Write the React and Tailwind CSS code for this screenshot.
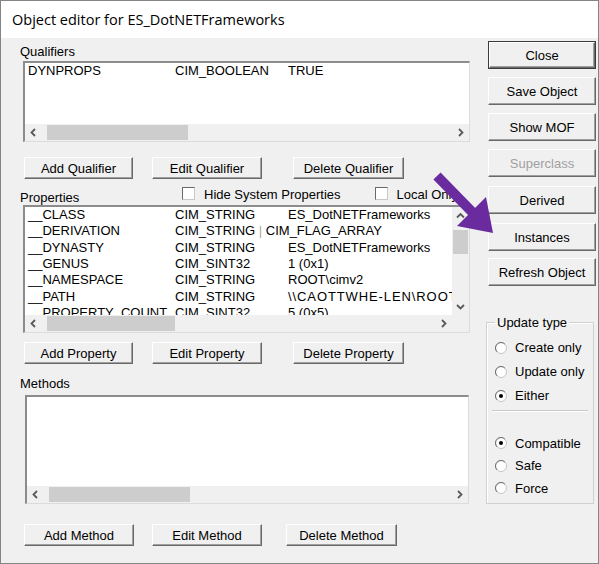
import React from "react";

const sans = "font-['Liberation_Sans',Arial,sans-serif]";

const qualifiers = [["DYNPROPS", "CIM_BOOLEAN", "TRUE"]];

const properties = [
  ["__CLASS", "CIM_STRING", "ES_DotNETFrameworks"],
  [
    "__DERIVATION",
    <>
      CIM_STRING <span className="text-[#b0a898]">|</span> CIM_FLAG_ARRAY
    </>,
    "",
  ],
  ["__DYNASTY", "CIM_STRING", "ES_DotNETFrameworks"],
  ["__GENUS", "CIM_SINT32", "1 (0x1)"],
  ["__NAMESPACE", "CIM_STRING", "ROOT\\cimv2"],
  [
    "__PATH",
    "CIM_STRING",
    <span className="tracking-[0.9px]">\\CAOTTWHE-LEN\ROOT\cimv2:ES_DotNETFrameworks</span>,
  ],
  ["__PROPERTY_COUNT", "CIM_SINT32", "5 (0x5)"],
];

const Chevron = ({ dir }) => {
  const pts = {
    left: "5,1 1.5,4.5 5,8",
    right: "2,1 5.5,4.5 2,8",
    up: "1,5.5 4.5,2 8,5.5",
    down: "1,2 4.5,5.5 8,2",
  }[dir];
  const box = dir === "left" || dir === "right" ? [7, 9] : [9, 7];
  return (
    <svg width={box[0]} height={box[1]} viewBox={`0 0 ${box[0]} ${box[1]}`}>
      <polyline points={pts} fill="none" stroke="#5a5a5a" strokeWidth="1.8" />
    </svg>
  );
};

const HScroll = ({ thumb }) => (
  <div className="h-[17px] shrink-0 flex bg-[#f0f0f0]">
    <div className="w-[17px] flex items-center justify-center">
      <Chevron dir="left" />
    </div>
    <div className="flex-1 py-[1px] pl-[5px]">
      <div className={`h-full bg-[#cdcdcd] ${thumb}`} />
    </div>
    <div className="w-[17px] flex items-center justify-center">
      <Chevron dir="right" />
    </div>
  </div>
);

const Row = ({ cells }) => (
  <div className="flex h-[16.33px] leading-[16.33px] whitespace-nowrap">
    <div className="w-[150px] shrink-0 pl-[3px]">{cells[0]}</div>
    <div className="w-[113px] shrink-0">{cells[1]}</div>
    <div className="shrink-0">{cells[2]}</div>
  </div>
);

const sunken =
  "bg-white border-t-2 border-l-2 border-r border-b border-t-[#8c8c8c] border-l-[#8c8c8c] border-r-[#dcdcdc] border-b-[#dcdcdc]";

const Btn = ({ label, className = "", disabled }) => (
  <button
    className={`bg-[#f0f0f0] border border-t-white border-l-white border-r-[#696969] border-b-[#696969] shadow-[inset_-1px_-1px_0_#a0a0a0] text-[13px] leading-none ${
      disabled ? "text-[#a0a0a0]" : "text-black"
    } ${className}`}
  >
    {label}
  </button>
);

const Check = ({ label }) => (
  <div className="flex items-start">
    <span className="w-[13px] h-[13px] bg-white border border-t-[#696969] border-l-[#696969] border-r-[#c8c8c8] border-b-[#c8c8c8]" />
    <span className="ml-[9px] leading-[15px] whitespace-nowrap">{label}</span>
  </div>
);

const Radio = ({ label, checked, className }) => (
  <div className={`flex items-center pl-[8px] ${className}`}>
    <svg width="12" height="12" viewBox="0 0 12 12" className="shrink-0">
      <circle cx="6" cy="6" r="5.5" fill="#fff" stroke="#c4c4c4" />
      <path d="M2.1 9.9 A5.5 5.5 0 0 1 9.9 2.1" fill="none" stroke="#6e6e6e" />
      {checked && <circle cx="6" cy="6" r="2" fill="#000" />}
    </svg>
    <span className="ml-[8px] whitespace-nowrap">{label}</span>
  </div>
);

export default function App() {
  return (
    <div
      className={`relative w-[599px] h-[564px] bg-[#f0f0f0] border border-[#858585] flex flex-col text-[13px] text-black ${sans}`}
    >
      {/* title bar */}
      <div className="h-[37px] shrink-0 bg-white flex items-center px-[11px]">
        <span className="font-['Open_Sans',sans-serif] text-[14.5px] text-black">
          Object editor for ES_DotNETFrameworks
        </span>
      </div>

      <div className="flex flex-1">
        {/* left side: qualifiers, properties, methods */}
        <div className="w-[487px] shrink-0 pl-[19px] flex flex-col">
          <div className="mt-[6px] leading-[15px]">Qualifiers</div>
          <div className={`mt-[2px] ml-[3px] w-[447px] h-[81px] flex flex-col ${sunken}`}>
            <div className="flex-1 overflow-hidden">
              {qualifiers.map((q) => (
                <Row key={q[0]} cells={q} />
              ))}
            </div>
            <HScroll thumb="w-[141px]" />
          </div>
          <div className="mt-[15px] ml-[4px] flex h-[22px]">
            <Btn label="Add Qualifier" className="w-[109px]" />
            <Btn label="Edit Qualifier" className="w-[110px] ml-[19px]" />
            <Btn label="Delete Qualifier" className="w-[111px] ml-[31px]" />
          </div>

          <div className="mt-[8px] h-[18px] flex">
            <div className="pt-[3px] leading-[15px] w-[162px]">Properties</div>
            <Check label="Hide System Properties" />
            <div className="ml-[34px]">
              <Check label="Local Only" />
            </div>
          </div>
          <div className={`ml-[3px] w-[447px] h-[128px] flex flex-col ${sunken}`}>
            <div className="flex-1 flex min-h-0">
              <div className="flex-1 overflow-hidden">
                {properties.map((p) => (
                  <Row key={p[0]} cells={p} />
                ))}
              </div>
              <div className="w-[17px] flex flex-col bg-[#f0f0f0]">
                <div className="h-[17px] flex items-center justify-center">
                  <Chevron dir="up" />
                </div>
                <div className="flex-1 px-[1px] pt-[6px]">
                  <div className="h-[24px] bg-[#cdcdcd]" />
                </div>
                <div className="h-[17px] flex items-center justify-center">
                  <Chevron dir="down" />
                </div>
              </div>
            </div>
            <div className="flex">
              <div className="flex-1">
                <HScroll thumb="w-[128px]" />
              </div>
              <div className="w-[17px] bg-[#f0f0f0]" />
            </div>
          </div>
          <div className="mt-[9px] ml-[4px] flex h-[22px]">
            <Btn label="Add Property" className="w-[109px]" />
            <Btn label="Edit Property" className="w-[110px] ml-[19px]" />
            <Btn label="Delete Property" className="w-[111px] ml-[31px]" />
          </div>

          <div className="mt-[12px] leading-[15px]">Methods</div>
          <div className={`mt-[4px] ml-[5px] w-[444px] h-[109px] flex flex-col ${sunken}`}>
            <div className="flex-1" />
            <HScroll thumb="w-[141px]" />
          </div>
          <div className="mt-[20px] ml-[4px] flex h-[22px]">
            <Btn label="Add Method" className="w-[110px]" />
            <Btn label="Edit Method" className="w-[110px] ml-[18px]" />
            <Btn label="Delete Method" className="w-[111px] ml-[24px]" />
          </div>
        </div>

        {/* right side: command buttons and update type */}
        <div className="w-[108px] shrink-0 flex flex-col">
          <div className="mt-[3px] h-[28px] border border-[#3c3c3c] flex">
            <Btn label="Close" className="flex-1" />
          </div>
          <Btn label="Save Object" className="mt-[8px] h-[28px]" />
          <Btn label="Show MOF" className="mt-[8px] h-[28px]" />
          <Btn label="Superclass" disabled className="mt-[8px] h-[28px]" />
          <Btn label="Derived" className="mt-[9px] h-[28px]" />
          <Btn label="Instances" className="mt-[9px] h-[28px]" />
          <Btn label="Refresh Object" className="mt-[7px] h-[28px]" />

          <fieldset className="mt-[29px] -ml-[2px] w-[108px] h-[189px] border border-[#d0d0d0] shadow-[inset_1px_1px_0_#fff]">
            <legend className="ml-[8px] px-[2px] leading-[15px]">Update type</legend>
            <div className="mt-[6px]">
              <Radio label="Create only" className="h-[24px]" />
              <Radio label="Update only" className="h-[24px]" />
              <Radio label="Either" checked className="h-[24px]" />
            </div>
            <div className="mt-[2px] mx-[5px] h-[2px] border-t border-t-[#c8c8c8] border-b border-b-white" />
            <div className="mt-[20px]">
              <Radio label="Compatible" checked className="h-[22.5px]" />
              <Radio label="Safe" className="h-[22.5px]" />
              <Radio label="Force" className="h-[22.5px]" />
            </div>
          </fieldset>
        </div>
      </div>

      {/* pointer arrow toward Instances */}
      <svg
        className="absolute left-0 top-0 pointer-events-none"
        width="599"
        height="564"
        viewBox="0 0 599 564"
      >
        <line x1="436" y1="175" x2="476" y2="216" stroke="#6a2b9e" strokeWidth="10" />
        <polygon points="492,232 485,196 456,225" fill="#6a2b9e" />
      </svg>
    </div>
  );
}
